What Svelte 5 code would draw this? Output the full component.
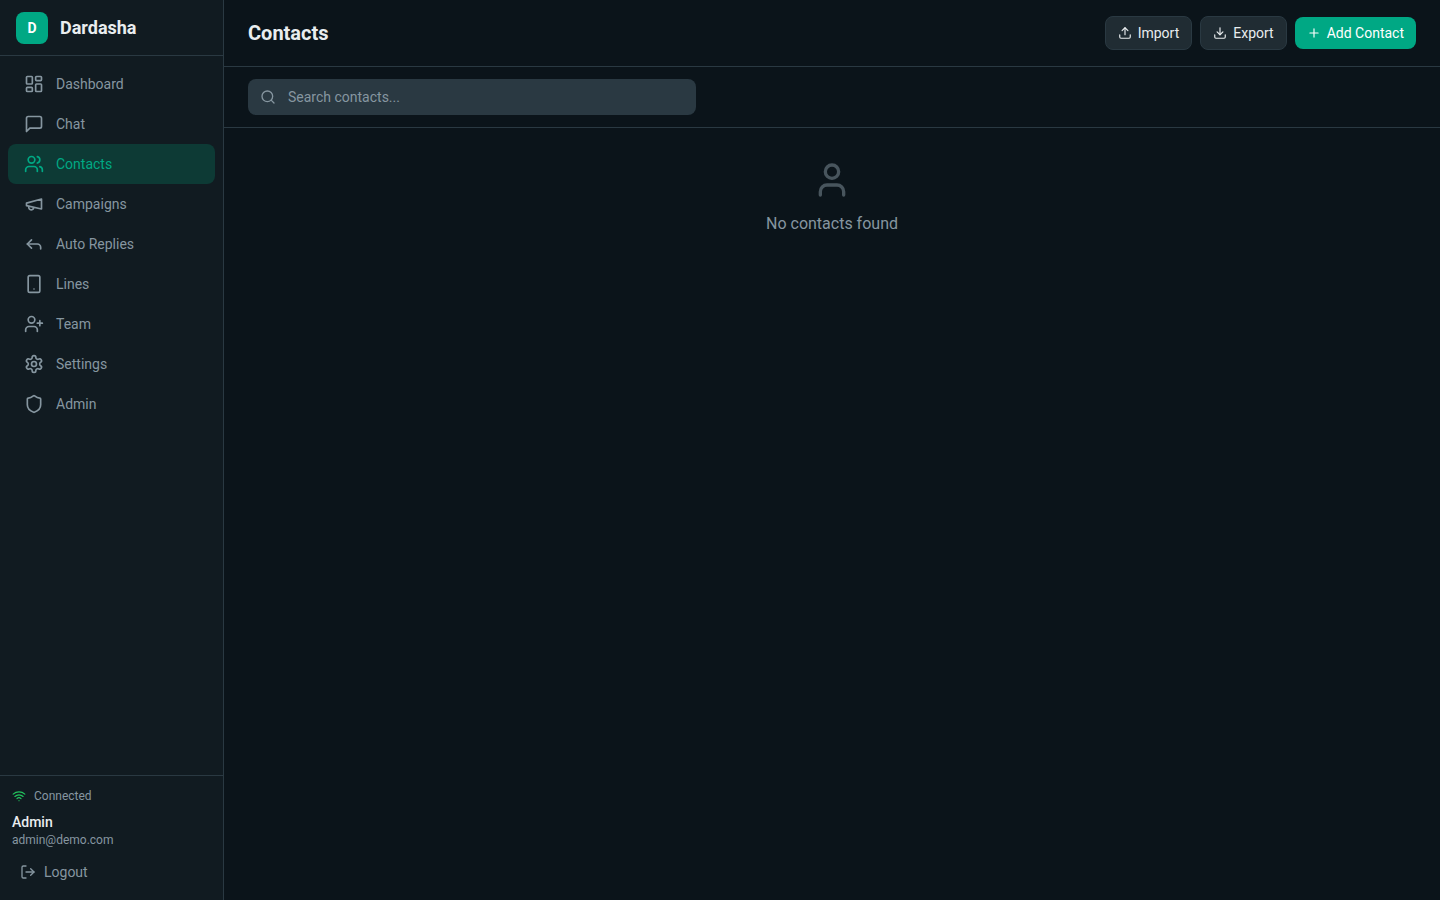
<script>
  const nav = [
    { label: 'Dashboard', icon: '<rect x="3" y="3" width="7" height="9" rx="1"/><rect x="14" y="3" width="7" height="5" rx="1"/><rect x="14" y="12" width="7" height="9" rx="1"/><rect x="3" y="16" width="7" height="5" rx="1"/>' },
    { label: 'Chat', icon: '<path d="M21 15a2 2 0 0 1-2 2H7l-4 4V5a2 2 0 0 1 2-2h14a2 2 0 0 1 2 2z"/>' },
    { label: 'Contacts', active: true, icon: '<path d="M16 21v-2a4 4 0 0 0-4-4H6a4 4 0 0 0-4 4v2"/><circle cx="9" cy="7" r="4"/><path d="M22 21v-2a4 4 0 0 0-3-3.87"/><path d="M16 3.13a4 4 0 0 1 0 7.75"/>' },
    { label: 'Campaigns', icon: '<path d="m3 11 18-5v12L3 14v-3z"/><path d="M11.6 16.8a3 3 0 1 1-5.8-1.6"/>' },
    { label: 'Auto Replies', icon: '<polyline points="9 17 4 12 9 7"/><path d="M20 18v-2a4 4 0 0 0-4-4H4"/>' },
    { label: 'Lines', icon: '<rect x="5" y="2" width="14" height="20" rx="2"/><line x1="12" y1="18" x2="12.01" y2="18"/>' },
    { label: 'Team', icon: '<path d="M16 21v-2a4 4 0 0 0-4-4H6a4 4 0 0 0-4 4v2"/><circle cx="9" cy="7" r="4"/><line x1="19" y1="8" x2="19" y2="14"/><line x1="22" y1="11" x2="16" y2="11"/>' },
    { label: 'Settings', icon: '<path d="M12.22 2h-.44a2 2 0 0 0-2 2v.18a2 2 0 0 1-1 1.73l-.43.25a2 2 0 0 1-2 0l-.15-.08a2 2 0 0 0-2.73.73l-.22.38a2 2 0 0 0 .73 2.73l.15.1a2 2 0 0 1 1 1.72v.51a2 2 0 0 1-1 1.74l-.15.09a2 2 0 0 0-.73 2.73l.22.38a2 2 0 0 0 2.73.73l.15-.08a2 2 0 0 1 2 0l.43.25a2 2 0 0 1 1 1.73V20a2 2 0 0 0 2 2h.44a2 2 0 0 0 2-2v-.18a2 2 0 0 1 1-1.73l.43-.25a2 2 0 0 1 2 0l.15.08a2 2 0 0 0 2.73-.73l.22-.39a2 2 0 0 0-.73-2.73l-.15-.08a2 2 0 0 1-1-1.74v-.5a2 2 0 0 1 1-1.74l.15-.09a2 2 0 0 0 .73-2.73l-.22-.38a2 2 0 0 0-2.73-.73l-.15.08a2 2 0 0 1-2 0l-.43-.25a2 2 0 0 1-1-1.73V4a2 2 0 0 0-2-2z"/><circle cx="12" cy="12" r="3"/>' },
    { label: 'Admin', icon: '<path d="M20 13c0 5-3.5 7.5-7.66 8.95a1 1 0 0 1-.67-.01C7.5 20.5 4 18 4 13V6a1 1 0 0 1 1-1c2 0 4.5-1.2 6.24-2.72a1.17 1.17 0 0 1 1.52 0C14.51 3.81 17 5 19 5a1 1 0 0 1 1 1z"/>' }
  ];
</script>

<div class="app">
  <aside class="sidebar">
    <div class="brand">
      <div class="logo">D</div>
      <span class="brand-name">Dardasha</span>
    </div>
    <nav class="nav">
      {#each nav as item}
        <a class="nav-item" class:active={item.active} href="#top">
          <svg width="20" height="20" viewBox="0 0 24 24" fill="none" stroke="currentColor" stroke-width="2" stroke-linecap="round" stroke-linejoin="round">{@html item.icon}</svg>
          <span>{item.label}</span>
        </a>
      {/each}
    </nav>
    <div class="footer">
      <div class="status">
        <svg class="wifi" width="14" height="14" viewBox="0 0 24 24" fill="none" stroke="currentColor" stroke-width="2" stroke-linecap="round" stroke-linejoin="round"><path d="M12 20h.01"/><path d="M2 8.82a15 15 0 0 1 20 0"/><path d="M5 12.859a10 10 0 0 1 14 0"/><path d="M8.5 16.429a5 5 0 0 1 7 0"/></svg>
        <span>Connected</span>
      </div>
      <div class="user-name">Admin</div>
      <div class="user-email">admin@demo.com</div>
      <button class="logout">
        <svg width="16" height="16" viewBox="0 0 24 24" fill="none" stroke="currentColor" stroke-width="2" stroke-linecap="round" stroke-linejoin="round"><path d="M9 21H5a2 2 0 0 1-2-2V5a2 2 0 0 1 2-2h4"/><polyline points="16 17 21 12 16 7"/><line x1="21" y1="12" x2="9" y2="12"/></svg>
        <span>Logout</span>
      </button>
    </div>
  </aside>

  <main class="main">
    <header class="topbar">
      <h1>Contacts</h1>
      <div class="actions">
        <button class="btn">
          <svg width="14" height="14" viewBox="0 0 24 24" fill="none" stroke="currentColor" stroke-width="2" stroke-linecap="round" stroke-linejoin="round"><path d="M21 15v4a2 2 0 0 1-2 2H5a2 2 0 0 1-2-2v-4"/><polyline points="17 8 12 3 7 8"/><line x1="12" y1="3" x2="12" y2="15"/></svg>
          Import
        </button>
        <button class="btn">
          <svg width="14" height="14" viewBox="0 0 24 24" fill="none" stroke="currentColor" stroke-width="2" stroke-linecap="round" stroke-linejoin="round"><path d="M21 15v4a2 2 0 0 1-2 2H5a2 2 0 0 1-2-2v-4"/><polyline points="7 10 12 15 17 10"/><line x1="12" y1="15" x2="12" y2="3"/></svg>
          Export
        </button>
        <button class="btn primary">
          <svg width="14" height="14" viewBox="0 0 24 24" fill="none" stroke="currentColor" stroke-width="2" stroke-linecap="round" stroke-linejoin="round"><path d="M5 12h14"/><path d="M12 5v14"/></svg>
          Add Contact
        </button>
      </div>
    </header>

    <div class="searchbar">
      <label class="search">
        <svg width="16" height="16" viewBox="0 0 24 24" fill="none" stroke="currentColor" stroke-width="2" stroke-linecap="round" stroke-linejoin="round"><circle cx="11" cy="11" r="8"/><path d="m21 21-4.3-4.3"/></svg>
        <input type="text" placeholder="Search contacts..." />
      </label>
    </div>

    <section class="empty">
      <svg width="40" height="40" viewBox="0 0 24 24" fill="none" stroke="currentColor" stroke-width="2" stroke-linecap="round" stroke-linejoin="round"><path d="M19 21v-2a4 4 0 0 0-4-4H9a4 4 0 0 0-4 4v2"/><circle cx="12" cy="7" r="4"/></svg>
      <p>No contacts found</p>
    </section>
  </main>
</div>

<style>
  :global(body) {
    margin: 0;
    background: #0b141a;
    font-family: Roboto, "Liberation Sans", sans-serif;
  }

  .app {
    display: flex;
    height: 900px;
    overflow: hidden;
  }

  .sidebar {
    width: 224px;
    box-sizing: border-box;
    display: flex;
    flex-direction: column;
    flex-shrink: 0;
    background: #111b21;
    border-right: 1px solid #2a3942;
  }

  .brand {
    display: flex;
    align-items: center;
    gap: 12px;
    height: 56px;
    box-sizing: border-box;
    padding: 0 16px;
    border-bottom: 1px solid #2a3942;
  }

  .logo {
    width: 32px;
    height: 32px;
    border-radius: 8px;
    background: #00a884;
    color: #fff;
    display: flex;
    align-items: center;
    justify-content: center;
    font-size: 14px;
    font-weight: 700;
  }

  .brand-name {
    color: #e9edef;
    font-size: 18px;
    font-weight: 700;
  }

  .nav {
    flex: 1;
    padding: 8px;
  }

  .nav-item {
    display: flex;
    align-items: center;
    gap: 12px;
    height: 40px;
    padding: 0 16px;
    border-radius: 8px;
    color: #8696a0;
    font-size: 14px;
    text-decoration: none;
  }

  .nav-item.active {
    background: #0d3a35;
    color: #00a884;
  }

  .footer {
    padding: 12px;
    border-top: 1px solid #2a3942;
  }

  .status {
    display: flex;
    align-items: center;
    gap: 8px;
    height: 16px;
    margin-bottom: 8px;
    color: #8696a0;
    font-size: 12px;
  }

  .wifi {
    color: #22c55e;
  }

  .user-name {
    color: #e9edef;
    font-size: 14px;
    font-weight: 500;
    line-height: 20px;
  }

  .user-email {
    color: #8696a0;
    font-size: 12px;
    line-height: 16px;
  }

  .logout {
    display: flex;
    align-items: center;
    gap: 8px;
    width: 100%;
    height: 32px;
    margin-top: 8px;
    padding: 0 8px;
    background: none;
    border: 0;
    color: #8696a0;
    font: inherit;
    font-size: 14px;
  }

  .main {
    flex: 1;
    min-width: 0;
  }

  .topbar {
    display: flex;
    align-items: center;
    justify-content: space-between;
    padding: 16px 24px;
    border-bottom: 1px solid #2a3942;
  }

  h1 {
    margin: 0;
    color: #e9edef;
    font-size: 20px;
    font-weight: 700;
  }

  .actions {
    display: flex;
    align-items: center;
    gap: 8px;
  }

  .btn {
    display: flex;
    align-items: center;
    gap: 6px;
    height: 34px;
    padding: 0 12px;
    border: 1px solid #2a3942;
    border-radius: 8px;
    background: #202c33;
    color: #e9edef;
    font: inherit;
    font-size: 14px;
  }

  .btn.primary {
    height: 32px;
    border: 0;
    background: #00a884;
    color: #fff;
  }

  .searchbar {
    padding: 12px 24px;
    border-bottom: 1px solid #2a3942;
  }

  .search {
    display: flex;
    align-items: center;
    gap: 12px;
    width: 448px;
    height: 36px;
    box-sizing: border-box;
    padding: 0 12px;
    border-radius: 8px;
    background: #2a3942;
    color: #8696a0;
  }

  input {
    flex: 1;
    min-width: 0;
    padding: 0;
    border: 0;
    outline: 0;
    background: none;
    color: #e9edef;
    font: inherit;
    font-size: 14px;
  }

  input::placeholder {
    color: #8696a0;
    opacity: 1;
  }

  .empty {
    display: flex;
    flex-direction: column;
    align-items: center;
    padding-top: 32px;
    color: #8696a0;
  }

  .empty svg {
    opacity: 0.5;
    margin-bottom: 12px;
  }

  .empty p {
    margin: 0;
    font-size: 16px;
    line-height: 24px;
  }
</style>
